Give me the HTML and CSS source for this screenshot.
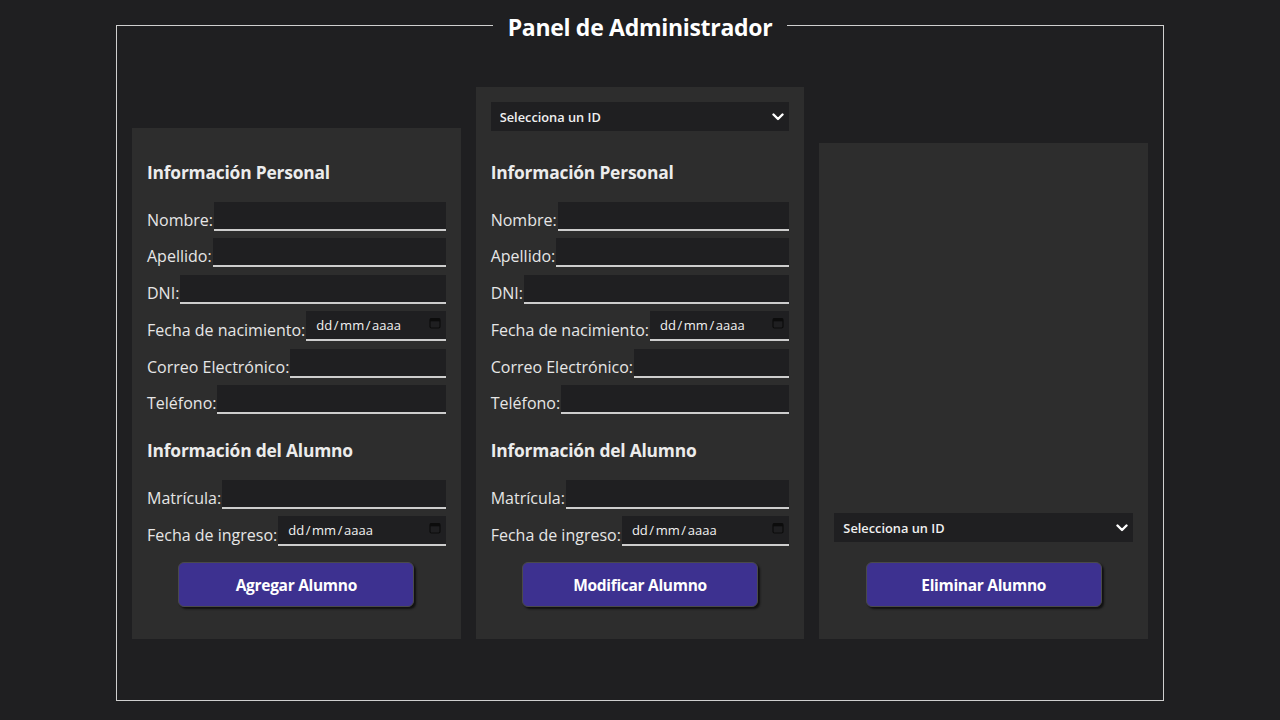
FILE: index.html
```html
<!DOCTYPE html>
<html lang="es">
<head>
<meta charset="utf-8">
<title>Panel de Administrador</title>
<link rel="stylesheet" href="styles.css">
</head>
<body>
<fieldset class="admin">
  <legend class="admin-title">Panel de Administrador</legend>
  <div class="panels">
    <form class="panel">
      <div class="section">
        <h3 class="section-title">Información Personal</h3>
        <div class="rows">
          <label class="row"><span class="label">Nombre:</span><span class="field"><input class="input" type="text"></span></label>
          <label class="row"><span class="label">Apellido:</span><span class="field"><input class="input" type="text"></span></label>
          <label class="row"><span class="label">DNI:</span><span class="field"><input class="input" type="text"></span></label>
          <label class="row"><span class="label">Fecha de nacimiento:</span><span class="field field-date"><input class="input input-date" type="text" placeholder="dd / mm / aaaa"><svg class="cal" viewBox="0 0 12 12"><rect x="1" y="1.5" width="10" height="9.5" rx="1.5" fill="none" stroke="#0c0c0c" stroke-width="1.2"/><rect x="1" y="1.5" width="10" height="2.8" fill="#0c0c0c"/></svg></span></label>
          <label class="row"><span class="label">Correo Electrónico:</span><span class="field"><input class="input" type="text"></span></label>
          <label class="row"><span class="label">Teléfono:</span><span class="field"><input class="input" type="text"></span></label>
        </div>
      </div>
      <div class="section">
        <h3 class="section-title">Información del Alumno</h3>
        <div class="rows">
          <label class="row"><span class="label">Matrícula:</span><span class="field"><input class="input" type="text"></span></label>
          <label class="row"><span class="label">Fecha de ingreso:</span><span class="field field-date"><input class="input input-date" type="text" placeholder="dd / mm / aaaa"><svg class="cal" viewBox="0 0 12 12"><rect x="1" y="1.5" width="10" height="9.5" rx="1.5" fill="none" stroke="#0c0c0c" stroke-width="1.2"/><rect x="1" y="1.5" width="10" height="2.8" fill="#0c0c0c"/></svg></span></label>
        </div>
      </div>
      <button class="btn" type="button">Agregar Alumno</button>
    </form>

    <form class="panel">
      <div class="select-wrap">
        <select class="select"><option>Selecciona un ID</option></select>
        <svg class="chev" viewBox="0 0 12 8"><path d="M1.5 1.5 L6 6 L10.5 1.5" fill="none" stroke="#fff" stroke-width="2.4" stroke-linecap="round" stroke-linejoin="round"/></svg>
      </div>
      <div class="section">
        <h3 class="section-title">Información Personal</h3>
        <div class="rows">
          <label class="row"><span class="label">Nombre:</span><span class="field"><input class="input" type="text"></span></label>
          <label class="row"><span class="label">Apellido:</span><span class="field"><input class="input" type="text"></span></label>
          <label class="row"><span class="label">DNI:</span><span class="field"><input class="input" type="text"></span></label>
          <label class="row"><span class="label">Fecha de nacimiento:</span><span class="field field-date"><input class="input input-date" type="text" placeholder="dd / mm / aaaa"><svg class="cal" viewBox="0 0 12 12"><rect x="1" y="1.5" width="10" height="9.5" rx="1.5" fill="none" stroke="#0c0c0c" stroke-width="1.2"/><rect x="1" y="1.5" width="10" height="2.8" fill="#0c0c0c"/></svg></span></label>
          <label class="row"><span class="label">Correo Electrónico:</span><span class="field"><input class="input" type="text"></span></label>
          <label class="row"><span class="label">Teléfono:</span><span class="field"><input class="input" type="text"></span></label>
        </div>
      </div>
      <div class="section">
        <h3 class="section-title">Información del Alumno</h3>
        <div class="rows">
          <label class="row"><span class="label">Matrícula:</span><span class="field"><input class="input" type="text"></span></label>
          <label class="row"><span class="label">Fecha de ingreso:</span><span class="field field-date"><input class="input input-date" type="text" placeholder="dd / mm / aaaa"><svg class="cal" viewBox="0 0 12 12"><rect x="1" y="1.5" width="10" height="9.5" rx="1.5" fill="none" stroke="#0c0c0c" stroke-width="1.2"/><rect x="1" y="1.5" width="10" height="2.8" fill="#0c0c0c"/></svg></span></label>
        </div>
      </div>
      <button class="btn" type="button">Modificar Alumno</button>
    </form>

    <form class="panel panel-delete">
      <div class="select-wrap">
        <select class="select"><option>Selecciona un ID</option></select>
        <svg class="chev" viewBox="0 0 12 8"><path d="M1.5 1.5 L6 6 L10.5 1.5" fill="none" stroke="#fff" stroke-width="2.4" stroke-linecap="round" stroke-linejoin="round"/></svg>
      </div>
      <button class="btn" type="button">Eliminar Alumno</button>
    </form>
  </div>
</fieldset>
</body>
</html>
```

FILE: styles.css
```css
* { box-sizing: border-box; }

html, body {
  margin: 0;
  background: #1f1f21;
}

body {
  font-family: "Open Sans", "Noto Sans", "DejaVu Sans", sans-serif;
  color: #e8e8e8;
  padding-top: 8px;
}

.admin {
  width: 1048px;
  margin: 0 auto;
  border: 1px solid #cfcfcf;
  padding: 45px 15px 61px;
  min-width: 0;
}

.admin-title {
  margin: 0 auto;
  padding: 4px 15px 0;
  font-size: 23px;
  font-weight: 700;
  line-height: 30px;
  color: #ffffff;
  letter-spacing: -0.3px;
}

.panels {
  display: flex;
  align-items: flex-end;
  gap: 15px;
}

.panel {
  flex: 1 1 0;
  min-width: 0;
  background: #2d2d2d;
  padding: 15px 15px 32px;
  display: flex;
  flex-direction: column;
}

.panel-delete {
  height: 496px;
  justify-content: flex-end;
}

.section-title {
  margin: 18px 0 19px;
  font-size: 17.4px;
  line-height: 22px;
  font-weight: 700;
  color: #ececec;
  letter-spacing: -0.2px;
}

.section + .section { margin-top: 7px; }

.rows {
  display: flex;
  flex-direction: column;
  gap: 7.4px;
}

.row {
  display: flex;
  align-items: flex-end;
  gap: 1px;
  font-size: 16px;
}

.label {
  white-space: nowrap;
  line-height: 20px;
  padding-bottom: 1px;
  color: #e6e6e6;
}

.field {
  flex: 1;
  min-width: 0;
  height: 29px;
  background: #1f1f21;
  border-bottom: 2px solid #cdcdcd;
  display: flex;
  align-items: center;
}

.field-date {
  height: 30px;
  padding-right: 3px;
}

.input {
  flex: 1;
  min-width: 0;
  width: 0;
  height: 100%;
  border: 0;
  outline: 0;
  background: transparent;
  color: #fff;
  font-family: inherit;
  font-size: 13px;
  padding: 0 10px;
}

.input-date {
  padding-bottom: 1px;
  word-spacing: -1.8px;
}

.input-date::placeholder {
  color: #f2f2f2;
  opacity: 1;
  word-spacing: -1.8px;
}

.cal {
  width: 12px;
  height: 12px;
  margin-bottom: 4px;
  margin-right: 2px;
  flex: none;
}

.select-wrap {
  position: relative;
  height: 29px;
  margin-bottom: 12px;
}

.panel-delete .select-wrap { margin-bottom: 20px; }

.select {
  appearance: none;
  -webkit-appearance: none;
  width: 100%;
  height: 100%;
  border: 0;
  background: #1f1f21;
  color: #f0f0f0;
  font-family: inherit;
  font-size: 12.8px;
  font-weight: 600;
  padding: 0 9px;
}

.chev {
  position: absolute;
  right: 5px;
  top: 11px;
  width: 12px;
  height: 8px;
  pointer-events: none;
}

.btn {
  align-self: center;
  width: 236px;
  height: 45px;
  margin-top: 16px;
  background: #3d3190;
  border: 1px solid #4a4a4a;
  border-radius: 6px;
  box-shadow: 2px 2px 2px #111;
  color: #fff;
  font-family: inherit;
  font-size: 15.5px;
  font-weight: 700;
  letter-spacing: -0.3px;
}

.panel-delete .btn { margin-top: 0; }
```
